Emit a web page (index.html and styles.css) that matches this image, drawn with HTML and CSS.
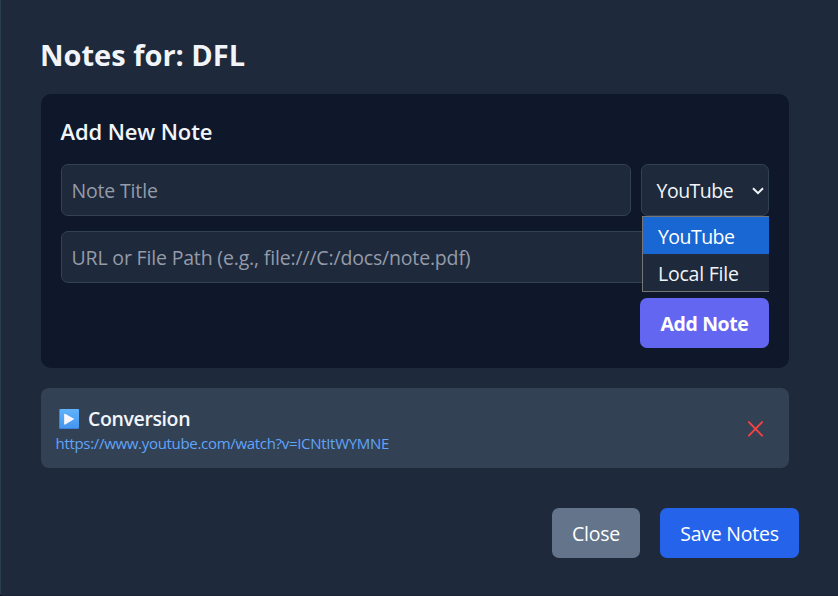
FILE: index.html
```html
<!DOCTYPE html>
<html lang="en">
<head>
<meta charset="utf-8">
<title>Notes for: DFL</title>
<link rel="stylesheet" href="styles.css">
</head>
<body>
<main class="modal">
  <h2 class="title">Notes for: DFL</h2>
  <section class="add-panel">
    <h3 class="subtitle">Add New Note</h3>
    <div class="row">
      <div class="field grow">Note Title</div>
      <div class="field select"><span>YouTube</span>
        <svg class="chevron" width="12" height="8" viewBox="0 0 12 8"><path d="M1 1.2 6 6.2 11 1.2" fill="none" stroke="currentColor" stroke-width="2"/></svg>
        <div class="menu">
          <div class="option active">YouTube</div>
          <div class="option local">Local File</div>
        </div>
      </div>
    </div>
    <div class="field url">URL or File Path (e.g., file:///C:/docs/note.pdf)</div>
    <button class="btn add">Add Note</button>
  </section>
  <section class="note">
    <div class="note-body">
      <div class="note-title">
        <svg class="play" width="20" height="20" viewBox="0 0 20 20">
          <defs><linearGradient id="g" x1="0" y1="0" x2="0" y2="1"><stop offset="0" stop-color="#60b3fc"/><stop offset="1" stop-color="#4596ee"/></linearGradient></defs>
          <rect width="20" height="20" rx="1" fill="#3f7fdf"/>
          <rect x="1" width="19" height="19" rx="1" fill="url(#g)"/>
          <path d="M5.7 5.1 14.6 10 5.7 15.3Z" fill="#fbf5ff" stroke="#fbf5ff" stroke-linejoin="round"/>
        </svg>
        <span>Conversion</span>
      </div>
      <a class="link">https://www.youtube.com/watch?v=ICNtItWYMNE</a>
    </div>
    <svg class="remove" width="16" height="16" viewBox="0 0 16 16"><path d="M.9 1.1 14.1 14.6M14.1 1.1.9 14.6" fill="none" stroke="currentColor" stroke-width="2" stroke-linecap="round"/></svg>
  </section>
  <footer class="actions">
    <button class="btn close">Close</button>
    <button class="btn save">Save Notes</button>
  </footer>
</main>
</body>
</html>
```
FILE: styles.css
```css
* { box-sizing: border-box; }
body { margin: 0; background: #070b17; font-family: "Open Sans", "Noto Sans", sans-serif; font-size: 19.5px; color: #f1f5f9; white-space: nowrap; }
.modal { width: 838px; height: 596px; padding: 37px 39px 0 40px; background: #1e293b; border-left: 1px solid #2d3d50; border-bottom: 1px solid #1d2436; border-bottom-left-radius: 3px; overflow: hidden; }
.title, .subtitle { margin: 0; }
.title { height: 57px; margin-left: -1px; font-size: 29px; line-height: 36px; font-weight: 700; }
.add-panel { width: 748px; height: 274px; padding: 20px; background: #0f172a; border-radius: 10px; display: flex; flex-direction: column; }
.subtitle { height: 50px; margin-left: -0.5px; font-size: 22px; line-height: 34px; font-weight: 600; letter-spacing: -0.12px; }
.row { display: flex; gap: 10px; margin-bottom: 15px; }
.field { height: 52px; padding: 2px 9.5px 0; display: flex; align-items: center; background: #1e293b; border: 1px solid #334155; border-radius: 7px; color: #949ba9; line-height: 48px; letter-spacing: -0.17px; }
.grow { flex: 1; }
.select { position: relative; width: 128px; padding: 2px 4px 0 14.5px; justify-content: space-between; color: #f1f5f9; letter-spacing: -0.5px; }
.chevron { margin-top: -1px; }
.menu { position: absolute; left: 0; top: 51px; width: 127px; height: 76px; background: #1e293b; border: 1px solid #757575; border-right: 0; z-index: 2; }
.option { height: 37px; padding-left: 15px; line-height: 39px; letter-spacing: -0.55px; }
.option.local { letter-spacing: -0.22px; }
.option.active { background: #1967d2; color: #fff; }
.url { flex: none; }
.btn { height: 50px; padding: 2px 0 0; border: 0; border-radius: 7px; color: #fff; font: inherit; line-height: 48px; text-align: center; letter-spacing: -0.25px; }
.add { width: 129px; margin-top: 15px; align-self: flex-end; background: #6366f1; font-weight: 700; letter-spacing: -0.4px; }
.note { width: 748px; height: 80px; margin-top: 20px; padding: 1px 25px 0 14.5px; display: flex; align-items: center; justify-content: space-between; background: #334155; border-radius: 8px; }
.note-title { display: flex; align-items: center; gap: 9px; height: 30px; padding-left: 3.5px; font-weight: 600; line-height: 30px; letter-spacing: -0.38px; }
.link { display: block; height: 20px; font-size: 15px; line-height: 19px; color: #60a5fa; letter-spacing: -0.31px; }
.remove { margin-top: 1px; color: #ef4444; }
.actions { display: flex; justify-content: flex-end; gap: 20px; margin-top: 40px; }
.close { width: 88px; background: #64748b; }
.save { width: 139px; background: #2563eb; }
```
